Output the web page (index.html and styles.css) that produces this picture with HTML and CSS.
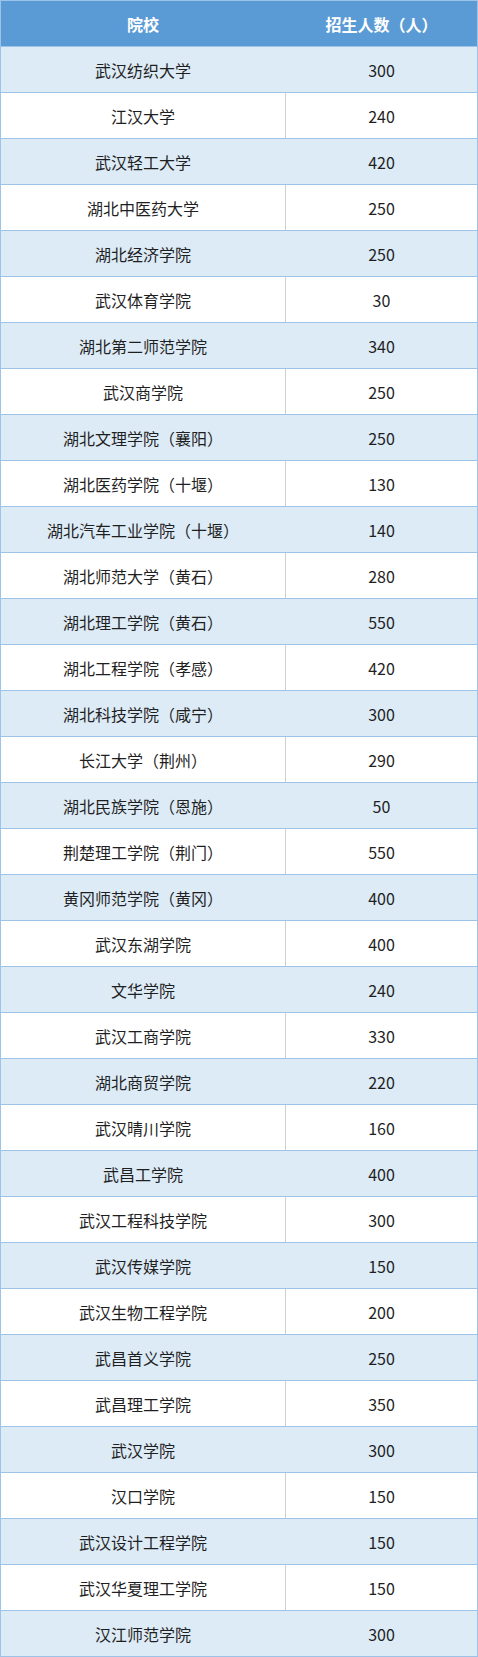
FILE: index.html
```html
<!DOCTYPE html>
<html lang="zh-CN">
<head>
<meta charset="utf-8">
<link rel="stylesheet" href="styles.css">
</head>
<body>
<div class="table">
  <div class="row head"><div class="c1">院校</div><div class="c2">招生人数（人）</div></div>
  <div class="row alt"><div class="c1">武汉纺织大学</div><div class="c2">300</div></div>
  <div class="row"><div class="c1">江汉大学</div><div class="c2">240</div></div>
  <div class="row alt"><div class="c1">武汉轻工大学</div><div class="c2">420</div></div>
  <div class="row"><div class="c1">湖北中医药大学</div><div class="c2">250</div></div>
  <div class="row alt"><div class="c1">湖北经济学院</div><div class="c2">250</div></div>
  <div class="row"><div class="c1">武汉体育学院</div><div class="c2">30</div></div>
  <div class="row alt"><div class="c1">湖北第二师范学院</div><div class="c2">340</div></div>
  <div class="row"><div class="c1">武汉商学院</div><div class="c2">250</div></div>
  <div class="row alt"><div class="c1">湖北文理学院（襄阳）</div><div class="c2">250</div></div>
  <div class="row"><div class="c1">湖北医药学院（十堰）</div><div class="c2">130</div></div>
  <div class="row alt"><div class="c1">湖北汽车工业学院（十堰）</div><div class="c2">140</div></div>
  <div class="row"><div class="c1">湖北师范大学（黄石）</div><div class="c2">280</div></div>
  <div class="row alt"><div class="c1">湖北理工学院（黄石）</div><div class="c2">550</div></div>
  <div class="row"><div class="c1">湖北工程学院（孝感）</div><div class="c2">420</div></div>
  <div class="row alt"><div class="c1">湖北科技学院（咸宁）</div><div class="c2">300</div></div>
  <div class="row"><div class="c1">长江大学（荆州）</div><div class="c2">290</div></div>
  <div class="row alt"><div class="c1">湖北民族学院（恩施）</div><div class="c2">50</div></div>
  <div class="row"><div class="c1">荆楚理工学院（荆门）</div><div class="c2">550</div></div>
  <div class="row alt"><div class="c1">黄冈师范学院（黄冈）</div><div class="c2">400</div></div>
  <div class="row"><div class="c1">武汉东湖学院</div><div class="c2">400</div></div>
  <div class="row alt"><div class="c1">文华学院</div><div class="c2">240</div></div>
  <div class="row"><div class="c1">武汉工商学院</div><div class="c2">330</div></div>
  <div class="row alt"><div class="c1">湖北商贸学院</div><div class="c2">220</div></div>
  <div class="row"><div class="c1">武汉晴川学院</div><div class="c2">160</div></div>
  <div class="row alt"><div class="c1">武昌工学院</div><div class="c2">400</div></div>
  <div class="row"><div class="c1">武汉工程科技学院</div><div class="c2">300</div></div>
  <div class="row alt"><div class="c1">武汉传媒学院</div><div class="c2">150</div></div>
  <div class="row"><div class="c1">武汉生物工程学院</div><div class="c2">200</div></div>
  <div class="row alt"><div class="c1">武昌首义学院</div><div class="c2">250</div></div>
  <div class="row"><div class="c1">武昌理工学院</div><div class="c2">350</div></div>
  <div class="row alt"><div class="c1">武汉学院</div><div class="c2">300</div></div>
  <div class="row"><div class="c1">汉口学院</div><div class="c2">150</div></div>
  <div class="row alt"><div class="c1">武汉设计工程学院</div><div class="c2">150</div></div>
  <div class="row"><div class="c1">武汉华夏理工学院</div><div class="c2">150</div></div>
  <div class="row alt last"><div class="c1">汉江师范学院</div><div class="c2">300</div></div>
</div>
</body>
</html>
```
FILE: styles.css
```css
html, body {
  margin: 0;
  padding: 0;
  background: #ffffff;
}
.table {
  width: 478px;
  box-sizing: border-box;
  border: 1px solid #9dc3e6;
  font-family: "Noto Sans CJK SC", "Noto Sans", sans-serif;
  font-size: 16px;
  color: #1f1f1f;
}
.row {
  display: grid;
  grid-template-columns: 284px 1fr;
  height: 46px;
  box-sizing: border-box;
  border-bottom: 1px solid #9dc3e6;
  background: #ffffff;
}
.row.last {
  border-bottom: none;
  height: 45px;
}
.row.alt {
  background: #ddebf7;
}
.c1, .c2 {
  display: flex;
  align-items: center;
  justify-content: center;
  line-height: 1;
}
.c2 {
  border-left: 1px solid #d0d0d0;
}
.row.alt .c2 {
  border-left-color: #ddebf7;
}
.head {
  background: #5b9bd5;
  color: #ffffff;
  font-weight: bold;
}
.head .c2 {
  border-left-color: #5b9bd5;
}
```
